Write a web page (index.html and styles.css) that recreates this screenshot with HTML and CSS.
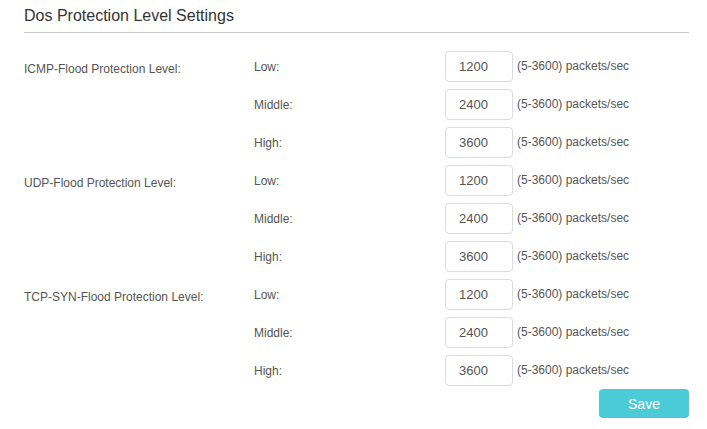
FILE: index.html
```html
<!DOCTYPE html>
<html>
<head>
<meta charset="utf-8">
<link rel="stylesheet" href="styles.css">
</head>
<body>
<div class="panel">
  <h2 class="title">Dos Protection Level Settings</h2>
  <div class="groups">
    <div class="group">
      <div class="group-label">ICMP-Flood Protection Level:</div>
      <div class="level">Low:</div><input class="num" value="1200"><div class="unit">(5-3600) packets/sec</div>
      <div class="level">Middle:</div><input class="num" value="2400"><div class="unit">(5-3600) packets/sec</div>
      <div class="level">High:</div><input class="num" value="3600"><div class="unit">(5-3600) packets/sec</div>
    </div>
    <div class="group">
      <div class="group-label">UDP-Flood Protection Level:</div>
      <div class="level">Low:</div><input class="num" value="1200"><div class="unit">(5-3600) packets/sec</div>
      <div class="level">Middle:</div><input class="num" value="2400"><div class="unit">(5-3600) packets/sec</div>
      <div class="level">High:</div><input class="num" value="3600"><div class="unit">(5-3600) packets/sec</div>
    </div>
    <div class="group">
      <div class="group-label">TCP-SYN-Flood Protection Level:</div>
      <div class="level">Low:</div><input class="num" value="1200"><div class="unit">(5-3600) packets/sec</div>
      <div class="level">Middle:</div><input class="num" value="2400"><div class="unit">(5-3600) packets/sec</div>
      <div class="level">High:</div><input class="num" value="3600"><div class="unit">(5-3600) packets/sec</div>
    </div>
  </div>
  <div class="actions"><button class="save">Save</button></div>
</div>
</body>
</html>
```
FILE: styles.css
```css
html, body {
  margin: 0;
  padding: 0;
  background: #fff;
}
body {
  font-family: "Liberation Sans", Arial, sans-serif;
  color: #555;
}
.panel {
  width: 665px;
  padding: 0 0 0 24px;
}
.title {
  margin: 6px 0 0;
  padding-bottom: 6px;
  font-size: 16px;
  line-height: 20px;
  font-weight: normal;
  color: #333;
  border-bottom: 1px solid #ccc;
}
.groups {
  margin-top: 18px;
  display: flex;
  flex-direction: column;
  gap: 6px;
}
.group {
  display: grid;
  grid-template-columns: 230px 191px 68px auto;
  grid-auto-rows: 32px;
  row-gap: 6px;
  font-size: 12px;
}
.group-label {
  grid-column: 1;
  grid-row: 1 / span 3;
  padding-top: 2px;
  line-height: 32px;
}
.level {
  grid-column: 2;
  line-height: 32px;
}
.num {
  grid-column: 3;
  box-sizing: border-box;
  width: 68px;
  height: 31px;
  margin: 0;
  padding: 0 0 0 13px;
  border: 1px solid #dcdcdc;
  border-radius: 4px;
  font-family: "Liberation Sans", Arial, sans-serif;
  font-size: 13px;
  color: #555;
  background: #fff;
  outline: none;
}
.unit {
  grid-column: 4;
  padding-left: 4px;
  line-height: 32px;
  margin-top: -1px;
}
.actions {
  display: flex;
  justify-content: flex-end;
  margin-top: 2px;
}
.save {
  width: 90px;
  height: 29px;
  border: none;
  border-radius: 4px;
  background: #4acbd6;
  color: #fff;
  font-family: "Liberation Sans", Arial, sans-serif;
  font-size: 14px;
  padding: 0;
}
```
